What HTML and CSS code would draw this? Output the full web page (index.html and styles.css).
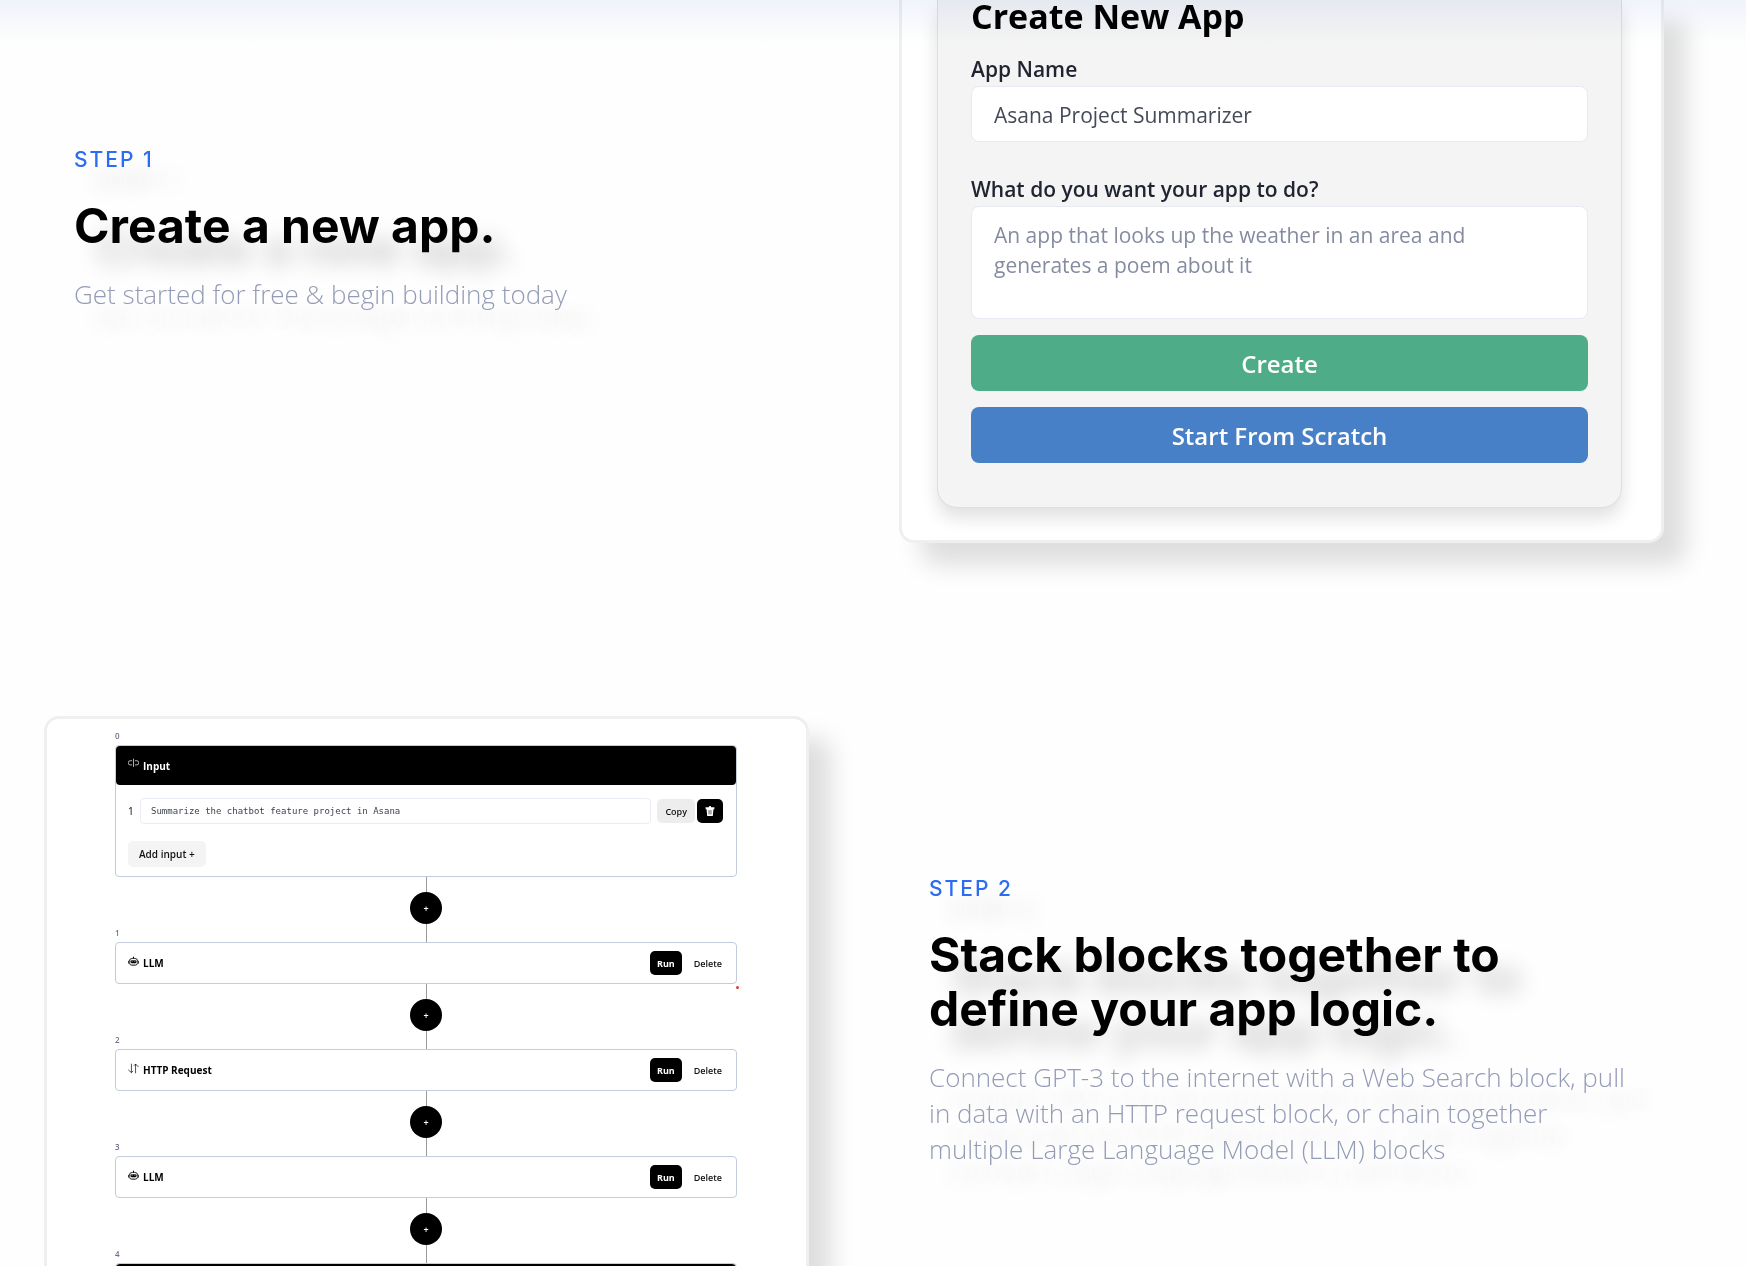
FILE: index.html
```html
<!DOCTYPE html>
<html lang="en">
<head>
<meta charset="utf-8">
<title>Build AI apps from blocks</title>
<link rel="stylesheet" href="styles.css">
</head>
<body>
<svg class="sprite" aria-hidden="true">
  <symbol id="icon-input" viewBox="0 0 16 16">
    <path d="M6 4H3a2.500 2.500 0 0 0-2.500 2.500v1A2.500 2.500 0 0 0 3 10h3M10 4h3a2.500 2.500 0 0 1 2.500 2.500v1A2.500 2.500 0 0 1 13 10h-3M8 1v12" fill="none" stroke="currentColor"/>
  </symbol>
  <symbol id="icon-robot" viewBox="0 0 16 16">
    <path d="M8 1v2.500" stroke="currentColor" stroke-width="1.500"/>
    <rect x="2" y="3.500" width="12" height="10" rx="4" fill="none" stroke="currentColor" stroke-width="1.200"/>
    <rect x="3.500" y="6" width="9" height="4.500" rx="2" fill="currentColor"/>
    <path d="M.6 7v4M15.400 7v4" stroke="currentColor" stroke-width="1.200"/>
    <path d="M5 7.500h2M9 7.500h2" stroke="#ccc"/>
    <path d="M5.500 12h5" stroke="#777"/>
  </symbol>
  <symbol id="icon-arrows" viewBox="0 0 16 16">
    <path d="M5 1v13M.5 10L5 14l2.500-2.500M11 15V1.500M15.500 6L11 1.500 8.500 4" fill="none" stroke="currentColor"/>
  </symbol>
  <symbol id="icon-trash" viewBox="0 0 16 16">
    <path d="M1 2h5l1-2h2l1 2h5v3H1zM2.500 5h11l-1 11h-9z" fill="currentColor"/>
    <path d="M6.500 6.500v7M9.500 6.500v7" stroke="#000"/>
  </symbol>
</svg>
<div class="top-fade"></div>
<main class="steps">
  <section class="step">
    <div class="copy copy-first">
      <p class="eyebrow">STEP 1</p>
      <h2>Create a new app.</h2>
      <p class="lead">Get started for free &amp; begin building today</p>
    </div>
    <div class="card card-form">
      <form class="panel">
        <h3>Create New App</h3>
        <label for="app-name">App Name</label>
        <input id="app-name" type="text" value="Asana Project Summarizer">
        <label for="app-goal">What do you want your app to do?</label>
        <textarea id="app-goal" placeholder="An app that looks up the weather in an area and generates a poem about it"></textarea>
        <button class="wide green" type="button">Create</button>
        <button class="wide blue" type="button">Start From Scratch</button>
      </form>
    </div>
  </section>

  <section class="step">
    <div class="card card-flow">
      <div class="number">0</div>
      <div class="block">
        <div class="block-title"><svg class="icon"><use href="#icon-input"/></svg>Input</div>
        <div class="block-body">
          <div class="input-row">
            <label for="line-1">1</label>
            <input id="line-1" type="text" value="Summarize the chatbot feature project in Asana">
            <button class="small pale" type="button">Copy</button>
            <button class="small dark trash" type="button" aria-label="Remove input"><svg class="icon"><use href="#icon-trash"/></svg></button>
          </div>
          <button class="small add-input" type="button">Add input +</button>
        </div>
      </div>
      <div class="link"><button class="plus" type="button">+</button></div>
      <div class="number">1</div>
      <div class="block row flagged">
        <svg class="icon"><use href="#icon-robot"/></svg><span class="name">LLM</span>
        <button class="small dark" type="button">Run</button><button class="small plain" type="button">Delete</button>
      </div>
      <div class="link"><button class="plus" type="button">+</button></div>
      <div class="number">2</div>
      <div class="block row">
        <svg class="icon"><use href="#icon-arrows"/></svg><span class="name">HTTP Request</span>
        <button class="small dark" type="button">Run</button><button class="small plain" type="button">Delete</button>
      </div>
      <div class="link"><button class="plus" type="button">+</button></div>
      <div class="number">3</div>
      <div class="block row">
        <svg class="icon"><use href="#icon-robot"/></svg><span class="name">LLM</span>
        <button class="small dark" type="button">Run</button><button class="small plain" type="button">Delete</button>
      </div>
      <div class="link"><button class="plus" type="button">+</button></div>
      <div class="number">4</div>
      <div class="block"><div class="block-title"></div></div>
    </div>
    <div class="copy copy-second">
      <p class="eyebrow">STEP 2</p>
      <h2>Stack blocks together to define your app logic.</h2>
      <p class="lead">Connect GPT-3 to the internet with a Web Search block, pull in data with an HTTP request block, or chain together multiple Large Language Model (LLM) blocks</p>
    </div>
  </section>
</main>
</body>
</html>
```
FILE: styles.css
```css
* { box-sizing: border-box; }

body {
  margin: 0;
  height: 100vh;
  overflow: hidden;
  background: #fefefe;
  color: #000;
  font-family: "Open Sans", "Noto Sans", sans-serif;
}

button, input, textarea { font: inherit; margin: 0; }
button { border: 0; cursor: pointer; }
h2, h3, p { margin: 0; }
.sprite { position: absolute; width: 0; height: 0; }

.top-fade {
  position: absolute;
  inset: 0 0 auto;
  height: 44px;
  z-index: 2;
  background: linear-gradient(#f0f4fb, #fff);
  mix-blend-mode: multiply;
  pointer-events: none;
}

.steps {
  display: flex;
  flex-direction: column;
  gap: 173px;
  padding: 0 82px 0 44px;
}

.step {
  display: grid;
  grid-template-columns: 1fr 1fr;
  column-gap: 90px;
  align-items: start;
}

/* Step text */
.copy {
  padding: 0 30px;
  text-shadow: 22px 22px 22px rgba(0, 0, 0, .2);
}
.copy-first { padding-top: 145px; }
.copy-second { padding-top: 158px; }

.eyebrow {
  font: 500 21px/30px Inter, sans-serif;
  letter-spacing: 2px;
  color: #2b6cf0;
}

h2 {
  margin-top: 24px;
  font: 700 48px/54px Inter, sans-serif;
}

.lead {
  margin-top: 23px;
  font-size: 26px;
  line-height: 36px;
  font-weight: 300;
  color: #949bb6;
}

/* Cards */
.card {
  min-width: 0;
  border: 3px solid #efefef;
  border-radius: 15px;
  background: #fff;
  box-shadow: 22px 22px 24px rgba(0, 0, 0, .13);
}

.card-form {
  border-top: 0;
  border-radius: 0 0 15px 15px;
  padding: 0 39px 32px 35px;
}

.panel {
  display: flex;
  flex-direction: column;
  padding: 0 33px 44px;
  border: 1px solid #dedfe1;
  border-top: 0;
  border-radius: 0 0 20px 20px;
  background: #f4f4f4;
  box-shadow: 0 10px 18px rgba(0, 0, 0, .12);
}

h3 { font-size: 34px; line-height: 32px; font-weight: 700; padding-bottom: 22px; }

.panel label {
  padding-bottom: 2px;
  font-size: 21px;
  line-height: 30px;
  font-weight: 600;
  color: #1f2430;
}

.panel input, .panel textarea {
  border: 1px solid #e7eaf2;
  border-radius: 8px;
  background: #fff;
  color: #444a58;
  font-size: 21px;
  line-height: 30px;
  padding: 0 22px;
}
.panel input { height: 56px; margin-bottom: 32px; padding-top: 2px; }
.panel textarea { height: 113px; padding-top: 13px; resize: none; overflow: hidden; }
.panel textarea::placeholder { color: #858ca1; }

.wide {
  height: 56px;
  margin-top: 16px;
  border-radius: 8px;
  font-size: 24px;
  font-weight: 600;
  color: #fff;
}
.green { background: #4ead88; }
.blue { background: #4880c8; }

/* Block editor */
.card-flow { padding: 11px 69px 40px 68px; font-size: 10px; }

.number {
  padding-bottom: 4px;
  font-size: 8px;
  line-height: 11px;
  font-weight: 600;
  color: #68738f;
}

.block { border: 1px solid #c3cbdc; border-radius: 4px; background: #fff; }

.block-title {
  display: flex;
  align-items: center;
  gap: 4px;
  height: 39px;
  padding: 0 12px;
  border-radius: 4px;
  background: #000;
  color: #fff;
  font-weight: 700;
}

.icon { width: 11px; height: 11px; flex: none; }
.block-title .icon, .row > .icon { margin-bottom: 4px; }

.block-body { padding: 13px 13px 9px 12px; }

.input-row { display: flex; align-items: center; gap: 2px; margin-bottom: 17px; }
.input-row label { width: 10px; }
.input-row input {
  flex: 1;
  min-width: 0;
  height: 26px;
  margin-right: 4px;
  padding: 0 10px;
  border: 1px solid #e9edf6;
  border-radius: 4px;
  color: #3c4250;
  font: 9px "DejaVu Sans Mono", monospace;
}

.small {
  height: 24px;
  padding: 0 8px;
  border-radius: 5px;
  font-size: 9px;
  font-weight: 600;
  color: #111;
}
.pale { background: #ededed; }
.dark { background: #000; color: #fff; font-weight: 700; }
.plain { background: none; padding: 0 2px; }
.trash { display: flex; align-items: center; padding: 0 8px; width: 26px; }
.trash .icon { width: 10px; height: 10px; }
.add-input { display: block; height: 26px; padding: 0 11px; background: #f4f4f4; font-size: 10px; }

.link {
  display: flex;
  justify-content: center;
  height: 50px;
  padding-top: 15px;
  background: linear-gradient(#9a9a9a, #9a9a9a) center / 1px 100% no-repeat;
}
.link + .number { background: linear-gradient(#9a9a9a, #9a9a9a) center / 1px 100% no-repeat; }

.plus {
  width: 32px;
  height: 32px;
  padding: 0;
  border-radius: 50%;
  background: #000;
  color: #fff;
  font-size: 9px;
  font-weight: 600;
}

.row { position: relative; display: flex; align-items: center; gap: 4px; height: 42px; padding: 0 12px; }
.row .name { flex: 1; font-weight: 700; }
.row .dark { padding: 0 7px; }
.row .plain { margin-left: 6px; }

.flagged::after {
  content: "";
  position: absolute;
  right: -3px;
  bottom: -6px;
  width: 3px;
  height: 3px;
  border-radius: 50%;
  background: #dc3a30;
}
```
